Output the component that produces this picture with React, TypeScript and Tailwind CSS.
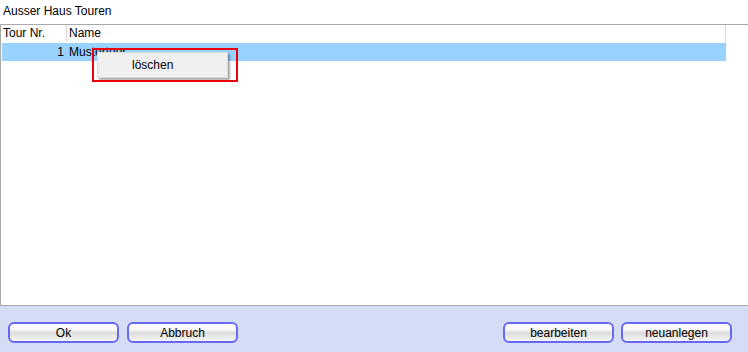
import React from 'react';

interface Tour {
    nr: number;
    name: string;
}

const tours: Tour[] = [{ nr: 1, name: 'Mustertour' }];

const buttonClass =
    'w-[111px] h-[21px] rounded-[6px] border-2 border-[#6868f4] bg-[linear-gradient(to_bottom,#ffffff_0%,#fbfbfb_30%,#dcdcdc_52%,#e9e9e9_75%,#f6f6f6_100%)] text-[12px] leading-none text-black flex items-center justify-center';

const App: React.FC = () => {
    return (
        <div className="relative w-[748px] h-[352px] bg-white flex flex-col font-['Liberation_Sans',Arial,sans-serif] text-[12px] text-black overflow-hidden">
            {/* Title */}
            <div className="h-[24px] pl-[3px] pt-[4px] leading-[14px]">Ausser Haus Touren</div>

            {/* Table */}
            <div className="flex-1 border-t border-l border-b border-[#a9a9a9] flex flex-col">
                <div className="flex h-[17px] w-[725px] leading-[17px]">
                    <div className="w-[66px] pl-[2px] border-r border-[#d9d9d9]">Tour Nr.</div>
                    <div className="flex-1 pl-[2px] border-r border-[#d9d9d9]">Name</div>
                </div>
                <div className="h-[1px]" />
                {tours.map((t) => (
                    <div key={t.nr} className="flex h-[18px] w-[724px] ml-[1px] bg-[#99d1ff] leading-[18px]">
                        <div className="w-[64px] text-right pr-[2px]">{t.nr}</div>
                        <div className="flex-1 pl-[3px]">{t.name}</div>
                    </div>
                ))}
            </div>

            {/* Footer */}
            <div className="h-[46px] bg-[#d4ddf5] flex items-start pt-[16px] px-[8px]">
                <div className="flex gap-[8px]">
                    <button className={buttonClass}>Ok</button>
                    <button className={buttonClass}>Abbruch</button>
                </div>
                <div className="ml-auto mr-[8px] flex gap-[7px]">
                    <button className={buttonClass}>bearbeiten</button>
                    <button className={buttonClass}>neuanlegen</button>
                </div>
            </div>

            {/* Context menu */}
            <div className="absolute left-[97px] top-[52px] w-[131px] h-[26px] bg-[#f0f0f0] border border-[#dadada] shadow-[2px_2px_2px_rgba(0,0,0,0.35)] flex items-center">
                <span className="pl-[34px] text-[12px]">löschen</span>
            </div>

            {/* Highlight */}
            <div className="absolute left-[92px] top-[48px] w-[146px] h-[34px] border-2 border-[#e8000b]" />
        </div>
    );
};

export default App;
